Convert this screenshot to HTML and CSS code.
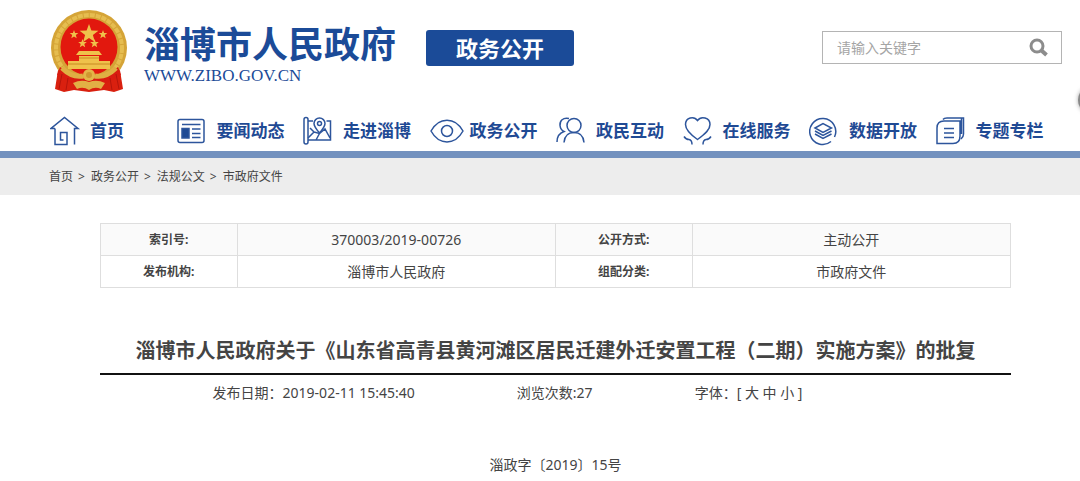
FILE: index.html
```html
<!DOCTYPE html>
<html lang="zh-CN">
<head>
    <meta charset="UTF-8">
    <meta name="viewport" content="width=device-width, initial-scale=1.0">
    <title>淄博市人民政府 - 政务公开</title>
    <link rel="stylesheet" href="styles.css">
</head>
<body>
    <header class="header">
        <svg class="emblem" viewBox="0 0 78 84" aria-hidden="true">
            <path d="M9 54 L5 79 L14 82 L24 80 L39 82 L54 80 L64 82 L73 79 L69 54 Z" fill="#d9200f"/>
            <circle cx="39" cy="38" r="38" fill="#d5a437"/>
            <circle cx="39" cy="38" r="33" fill="none" stroke="#e6bd50" stroke-width="4" stroke-dasharray="5 1"/>
            <circle cx="39" cy="37" r="28.5" fill="#e2180e"/>
            <g fill="#efc14b">
                <path d="M39 14 l2.4 6.6 7 .2 -5.5 4.3 2 6.8 -5.9 -4 -5.9 4 2 -6.8 -5.5 -4.3 7 -.2z"/>
                <path d="M24 20 l1.1 3 3.2 .1 -2.5 2 .9 3.1 -2.7 -1.8 -2.7 1.8 .9 -3.1 -2.5 -2 3.2 -.1z"/>
                <path d="M53 20 l1.1 3 3.2 .1 -2.5 2 .9 3.1 -2.7 -1.8 -2.7 1.8 .9 -3.1 -2.5 -2 3.2 -.1z"/>
                <path d="M32.5 29 l1.1 3 3.2 .1 -2.5 2 .9 3.1 -2.7 -1.8 -2.7 1.8 .9 -3.1 -2.5 -2 3.2 -.1z"/>
                <path d="M44.5 29 l1.1 3 3.2 .1 -2.5 2 .9 3.1 -2.7 -1.8 -2.7 1.8 .9 -3.1 -2.5 -2 3.2 -.1z"/>
                <path d="M29 41 H49 L52 45 H26 Z M29 46 H49 V51 H60 V59 H18 V51 H29 Z"/>
            </g>
            <path d="M18 54 H60 M29 48 H49" stroke="#c98a22" stroke-width="1"/>
            <path d="M10 57 Q23 69 39 69 Q55 69 68 57 L71 65 Q56 76 39 76 Q22 76 7 65 Z" fill="#d91c10"/>
            <path d="M12 58 Q22 68 33 66 M66 58 Q56 68 45 66" fill="none" stroke="#dfaf43" stroke-width="5"/>
            <circle cx="39" cy="65" r="6" fill="#e3b548"/>
            <circle cx="39" cy="65" r="3" fill="#cf9730"/>
            <path d="M23 73 Q31 69 39 72 Q47 69 55 73 L51 79 Q45 76 39 80 Q33 76 27 79 Z" fill="#e2b045"/>
            <path d="M12 64 L9 79 M18 68 L16 80 M66 64 L69 79 M60 68 L62 80" stroke="#b5150b" stroke-width="1"/>
        </svg>
        <div class="brand">
            <h1>淄博市人民政府</h1>
            <p>WWW.ZIBO.GOV.CN</p>
        </div>
        <a href="#" class="channel">政务公开</a>
        <form class="search">
            <input type="text" name="keyword" placeholder="请输入关键字" aria-label="请输入关键字">
            <button type="submit" aria-label="搜索">
                <svg viewBox="0 0 20 20"><circle cx="8" cy="8" r="6" fill="none" stroke="#8c8c8c" stroke-width="3"/><path d="M12.5 12.5 L17.5 17" stroke="#8c8c8c" stroke-width="4"/></svg>
            </button>
        </form>
    </header>

    <nav class="nav">
        <a href="#">
            <svg viewBox="0 0 34 32"><path d="M5 13.5 H1 L14.5 2.5 L28 13.5 H24.5 V29.5 M5 13.5 V29.5 H17 V17.5 H10.5 V25 H13.5"/></svg>
            首页
        </a>
        <a href="#">
            <svg viewBox="0 0 34 32"><rect x="1" y="4.5" width="26" height="23" rx="2"/><path d="M5 9.5 H23.5 M15 14 H23.5 M15 18.5 H23.5 M15 22.5 H23.5"/><rect class="fill" x="5" y="13.5" width="7" height="9.5"/></svg>
            要闻动态
        </a>
        <a href="#">
            <svg viewBox="0 0 34 32"><path d="M5 25 H27.5 V6 H23.5 M5 6 H10 M7 13 L11 17 L5 23 M11 17 L16.5 18.5 L22 14 L27 23 M16.5 18.5 L13 25"/><rect x="1" y="2.5" width="4" height="26.5" rx="2"/><path d="M16.5 18 C13.5 14.5 11 11.5 11 8.5 A5.5 5.5 0 0 1 22 8.5 C22 11.5 19.5 14.5 16.5 18 Z" class="paper"/><circle cx="16.5" cy="8.5" r="2"/></svg>
            走进淄博
        </a>
        <a href="#">
            <svg viewBox="0 0 34 32"><path d="M1 16 C9 1.5 25 1.5 33 16 C25 30.5 9 30.5 1 16 Z"/><circle cx="17" cy="16" r="5.5"/></svg>
            政务公开
        </a>
        <a href="#">
            <svg viewBox="0 0 34 32"><circle cx="18" cy="10.5" r="7"/><path d="M8 27.5 C8.5 21.5 12 17.5 18 17.5 C24 17.5 27.5 21.5 28 27.5 M13 3.5 C7 2 3.5 6 4 10.5 C4.3 13.5 6 15.5 8 16.5 C3.5 18 1 22 1 27"/></svg>
            政民互动
        </a>
        <a href="#">
            <svg viewBox="0 0 34 32"><path d="M14.5 24.5 C6 18.5 2.5 14.5 2.5 9.5 C2.5 2.5 11 .5 14.5 5.5 C18 .5 27 2.5 27 9.5 C27 14.5 23 18.5 14.5 24.5 Z M1 21.5 Q3 24.5 6 24.5 Q9 25 9 29.5 M28 21.5 Q26 24.5 23 24.5 Q20 25 20 29.5"/></svg>
            在线服务
        </a>
        <a href="#">
            <svg viewBox="0 0 34 32"><path d="M22 26.5 A13 13 0 1 1 25.5 22"/><path d="M6 13 L14 8.5 L22.5 13 L14 17.5 Z M6 16 L14 20.5 L22.5 16 M6 19 L14 23.5 L22.5 19"/></svg>
            数据开放
        </a>
        <a href="#">
            <svg viewBox="0 0 34 32"><path d="M1 28.5 V13 Q1 6 8 6 H24 V21 Q24 28.5 17 28.5 Z M7 4.5 Q8 3 11 3 H27.5 V19 Q27.5 22 25 24 M25.5 3 V19 M8 13.5 H18 M8 18 H18 M8 22.5 H18"/></svg>
            专题专栏
        </a>
    </nav>

    <div class="breadcrumb">
        <a href="#">首页</a><span>&gt;</span><a href="#">政务公开</a><span>&gt;</span><a href="#">法规公文</a><span>&gt;</span><a href="#">市政府文件</a>
    </div>

    <main class="article">
        <table class="info">
            <tr>
                <th scope="row">索引号:</th>
                <td>370003/2019-00726</td>
                <th scope="row">公开方式:</th>
                <td>主动公开</td>
            </tr>
            <tr>
                <th scope="row">发布机构:</th>
                <td>淄博市人民政府</td>
                <th scope="row">组配分类:</th>
                <td>市政府文件</td>
            </tr>
        </table>

        <h2>淄博市人民政府关于《山东省高青县黄河滩区居民迁建外迁安置工程（二期）实施方案》的批复</h2>
        <div class="meta">
            <span>发布日期：2019-02-11 15:45:40</span>
            <span>浏览次数:27</span>
            <span>字体：[ <a href="#">大</a> <a href="#">中</a> <a href="#">小</a> ]</span>
        </div>
        <p class="doc-number">淄政字〔2019〕15号</p>
    </main>

    <!-- side toolbar handle, mostly tucked away -->
    <button type="button" class="side-handle" aria-label="展开"></button>
</body>
</html>
```
FILE: styles.css
```css
* {
    margin: 0;
    padding: 0;
    box-sizing: border-box;
}

body {
    position: relative;
    overflow-x: hidden;
    background-color: #fff;
    color: #444;
    font-family: "Noto Sans", "Noto Sans CJK SC", sans-serif;
    font-size: 14px;
    line-height: 20px;
}

a {
    color: inherit;
    text-decoration: none;
}

.header {
    display: flex;
    align-items: flex-start;
    padding: 10px 18px 7px 50px;
}

.emblem {
    width: 78px;
    height: 84px;
}

.brand {
    margin: 16px 30px 0 16px;
    color: #1b4b98;
}

.brand h1 {
    font-family: "Liberation Sans", "Noto Sans CJK SC", sans-serif;
    font-size: 36px;
    font-weight: bold;
    line-height: 40px;
}

.brand p {
    font-family: "Liberation Serif", serif;
    font-size: 17px;
    line-height: 20px;
}

.channel {
    width: 148px;
    margin-top: 20px;
    border-radius: 3px;
    background-color: #1b4b98;
    color: #fff;
    font-size: 22px;
    font-weight: bold;
    line-height: 36px;
    text-align: center;
}

.search {
    display: flex;
    align-items: center;
    width: 240px;
    height: 33px;
    margin: 21px 0 0 auto;
    padding: 0 12px 0 14px;
    border: 1px solid #b4b4b4;
}

.search input {
    flex: 1;
    min-width: 0;
    border: none;
    outline: none;
    background: none;
    font-family: inherit;
    font-size: 14px;
}

.search input::placeholder {
    color: #a5a5a5;
}

.search button {
    width: 20px;
    height: 20px;
    border: none;
    background: none;
    cursor: pointer;
}

.search svg {
    display: block;
}

.nav {
    display: grid;
    grid-template-columns: repeat(8, 1fr);
    padding: 14px 18px 4px 50px;
    border-bottom: 7px solid #7391be;
}

.nav a {
    display: flex;
    align-items: center;
    gap: 6px;
    color: #1f4a94;
    font-size: 17px;
    font-weight: bold;
    line-height: 32px;
    white-space: nowrap;
}

.nav svg {
    width: 34px;
    height: 32px;
    fill: none;
    stroke: #2d559c;
    stroke-width: 1.5;
}

.nav .fill {
    fill: #1f4a94;
}

.nav .paper {
    fill: #fff;
}

.breadcrumb {
    padding: 9px 18px 8px 49px;
    background-color: #ededed;
    font-size: 12px;
}

.breadcrumb span {
    margin: 0 6px 0 5px;
}

.article {
    margin: 28px 69px 0 100px;
}

.info {
    width: 100%;
    table-layout: fixed;
    border-collapse: collapse;
}

.info th,
.info td {
    height: 32px;
    border: 1px solid #dedede;
    text-align: center;
}

.info th {
    width: 15%;
    font-size: 12px;
}

.info td {
    width: 35%;
}

.info tr:first-child {
    background-color: #fafafa;
}

.article h2 {
    margin-top: 47px;
    padding-bottom: 6px;
    border-bottom: 2px solid #111;
    font-size: 20px;
    line-height: 32px;
    text-align: center;
}

.meta {
    display: flex;
    justify-content: center;
    gap: 102px;
    margin-top: 8px;
    padding-right: 96px;
}

.doc-number {
    margin-top: 52px;
    text-align: center;
}

.side-handle {
    position: absolute;
    top: 86px;
    right: -26px;
    width: 28px;
    height: 28px;
    border: none;
    border-radius: 50%;
    background-color: #888;
    box-shadow: 0 0 4px #aaa;
}
```
